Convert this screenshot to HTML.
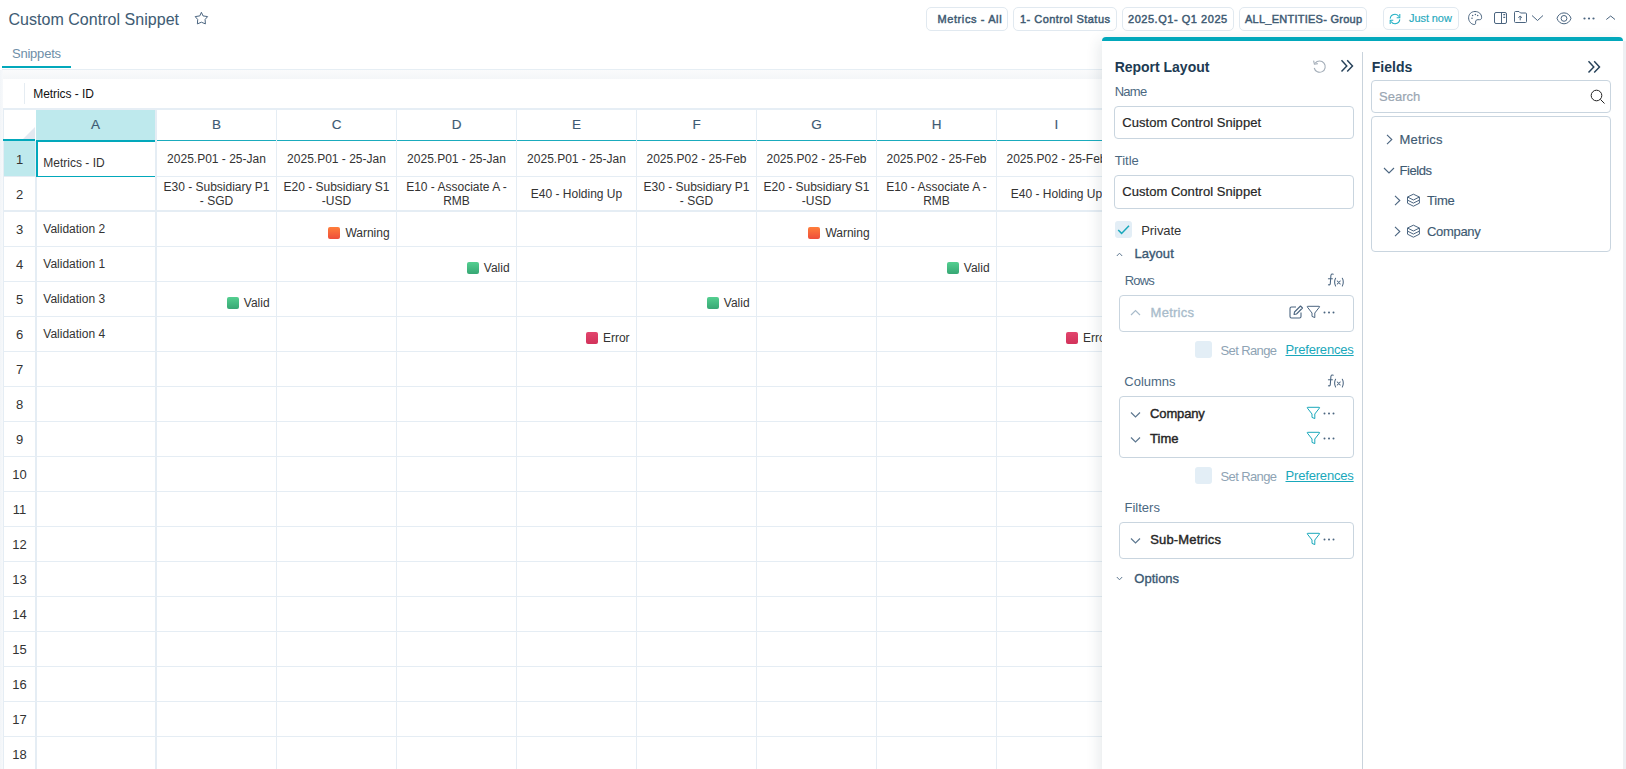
<!DOCTYPE html>
<html><head><meta charset="utf-8">
<style>
*{box-sizing:border-box;margin:0;padding:0}
html,body{width:1626px;height:769px;overflow:hidden;background:#fff;font-family:"Liberation Sans",sans-serif;position:relative}
.a{position:absolute}
.t{position:absolute;white-space:nowrap;line-height:1}
.chip{position:absolute;top:7px;height:24px;border:1px solid #e1e9f0;border-radius:5px;background:#fff}
.hl{position:absolute;height:1px;background:#e5edf4}
.vl{position:absolute;width:1px;background:#e5edf4}
.sq{position:absolute;width:12px;height:12px;border-radius:2px}
.sqw{background:linear-gradient(#ff7e3b,#ee4d3b)}
.sqv{background:linear-gradient(#54cf90,#37a774)}
.sqe{background:linear-gradient(#e2456d,#d2325a)}
.box{position:absolute;border:1px solid #c9d5df;border-radius:4px;background:#fff}
.cb{position:absolute;width:17px;height:17px;background:#e3eef6;border-radius:3px}
svg{position:absolute;overflow:visible}
</style></head><body>

<div class="t" style="left:8.50px;top:12.06px;font-size:16px;color:#405c74;letter-spacing:0.031px;-webkit-text-stroke:0.05px #405c74;">Custom Control Snippet</div>
<svg style="left:194px;top:11px" width="15" height="15" viewBox="0 0 15 15"><path d="M7.4 1.3 L9 4.9 L13.6 5.6 L11.1 8.5 L11.4 12.9 L7.4 11.2 L3.4 12.9 L3.7 8.5 L1.2 5.6 L5.8 4.9 Z" fill="none" stroke="#4b6580" stroke-width="1" stroke-linejoin="round"/></svg>
<div class="chip" style="left:926px;width:82px"></div>
<div class="t" style="left:937.40px;top:13.99px;font-size:11px;color:#3e5a72;letter-spacing:0.615px;-webkit-text-stroke:0.45px #3e5a72;">Metrics - All</div>
<div class="chip" style="left:1013px;width:104px"></div>
<div class="t" style="left:1020.00px;top:13.99px;font-size:11px;color:#3e5a72;letter-spacing:0.465px;-webkit-text-stroke:0.45px #3e5a72;">1- Control Status</div>
<div class="chip" style="left:1122px;width:112px"></div>
<div class="t" style="left:1128.00px;top:13.99px;font-size:11px;color:#3e5a72;letter-spacing:0.538px;-webkit-text-stroke:0.45px #3e5a72;">2025.Q1- Q1 2025</div>
<div class="chip" style="left:1239px;width:128px"></div>
<div class="t" style="left:1245.00px;top:13.99px;font-size:11px;color:#3e5a72;letter-spacing:0.251px;-webkit-text-stroke:0.45px #3e5a72;">ALL_ENTITIES- Group</div>
<div class="chip" style="left:1383px;width:76px;height:23px"></div>
<svg style="left:1389px;top:13px" width="12" height="12" viewBox="0 0 12 12"><g fill="none" stroke="#1fb0c4" stroke-width="1.05"><path d="M1.2 5.6 A4.7 4.7 0 0 1 9.9 3.6"/><path d="M10.8 1.1 V4.8 H7.7"/><path d="M10.8 6.4 A4.7 4.7 0 0 1 2.1 8.4"/><path d="M1.2 10.9 V7.2 H4.3"/></g></svg>
<div class="t" style="left:1409.00px;top:12.69px;font-size:11px;color:#1fa9bd;letter-spacing:-0.079px;-webkit-text-stroke:0.15px #1fa9bd;">Just now</div>
<!-- header icons -->
<svg style="left:1468px;top:11px" width="15" height="15" viewBox="0 0 15 15"><path d="M7 0.5 C3.2 0.5 0.6 3.3 0.6 6.8 C0.6 10.5 3.4 13.5 6.3 13.5 C7.8 13.5 7.6 12.2 7.6 11 C7.6 9.4 8.4 8.7 10 8.7 L11.6 8.7 C13.1 8.7 13.6 7.8 13.6 6.4 C13.6 3 10.8 0.5 7 0.5 Z" fill="none" stroke="#4b6580" stroke-width="1"/><circle cx="4.6" cy="4.6" r=".75" fill="#4b6580"/><circle cx="7.4" cy="3.5" r=".75" fill="#4b6580"/><circle cx="9.7" cy="4.6" r=".75" fill="#4b6580"/><circle cx="4" cy="7.3" r=".75" fill="#4b6580"/></svg>
<svg style="left:1494px;top:12px" width="14" height="13" viewBox="0 0 14 13"><rect x="0.5" y="0.5" width="12" height="11" rx="1.5" fill="none" stroke="#4b6580" stroke-width="1"/><path d="M7.5 0.5 V11.5" stroke="#4b6580" stroke-width="1"/><path d="M9.3 2.6 H11.2 M9.3 5.4 H11.2" stroke="#4b6580" stroke-width="1.1"/></svg>
<svg style="left:1514px;top:11px" width="14" height="13" viewBox="0 0 14 13"><path d="M0.5 1.5 Q0.5 0.5 1.5 0.5 H5 L6.5 2 H11.5 Q12.5 2 12.5 3 V10.5 Q12.5 11.5 11.5 11.5 H1.5 Q0.5 11.5 0.5 10.5 Z" fill="none" stroke="#4b6580" stroke-width="1" stroke-linejoin="round"/><path d="M6.2 9.3 V5 M4.4 6.8 L6.2 5 L8 6.8" fill="none" stroke="#4b6580" stroke-width="1"/></svg>
<svg style="left:1531px;top:14px" width="13" height="8" viewBox="0 0 13 8"><path d="M1 1.5 L6.5 6.5 L12 1.5" fill="none" stroke="#4b6580" stroke-width="1"/></svg>
<svg style="left:1556px;top:11.5px" width="16" height="13" viewBox="0 0 16 13"><path d="M1 6.3 C2 3 4.6 0.9 8 0.9 C11.4 0.9 14 3 15 6.3 C14 9.6 11.4 11.8 8 11.8 C4.6 11.8 2 9.6 1 6.3 Z" fill="none" stroke="#4b6580" stroke-width="1"/><circle cx="8" cy="6.4" r="2.9" fill="none" stroke="#4b6580" stroke-width="1"/></svg>
<svg style="left:1583px;top:17px" width="12" height="3" viewBox="0 0 12 3"><circle cx="1.5" cy="1.5" r="1.1" fill="#4b6580"/><circle cx="6" cy="1.5" r="1.1" fill="#4b6580"/><circle cx="10.5" cy="1.5" r="1.1" fill="#4b6580"/></svg>
<svg style="left:1605px;top:14px" width="11" height="7" viewBox="0 0 11 7"><path d="M1.3 5.5 L5.7 2 L10 5.5" fill="none" stroke="#4b6580" stroke-width="1"/></svg>


<div class="t" style="left:12.00px;top:46.80px;font-size:13px;color:#6e8ea7;letter-spacing:-0.224px;">Snippets</div>
<div class="a" style="left:2px;top:66px;width:69px;height:2px;background:#02a8bb"></div>
<div class="a" style="left:2px;top:69px;width:1100px;height:1px;background:#e6eef4"></div>
<div class="a" style="left:0;top:70px;width:1102px;height:9px;background:linear-gradient(#fafbfc,#f4f6f8)"></div>
<div class="a" style="left:0;top:70px;width:3px;height:699px;background:linear-gradient(90deg,#f2f5f8,#f7f9fb)"></div>
<div class="a" style="left:3px;top:79px;width:1099px;height:29px;background:#fff"></div>
<div class="a" style="left:24px;top:83px;width:1px;height:21px;background:#e5ecf2"></div>
<div class="t" style="left:33.20px;top:87.64px;font-size:12px;color:#111;letter-spacing:-0.047px;">Metrics - ID</div>
<div class="a" style="left:0;top:0;width:1102px;height:769px;overflow:hidden">
<div class="a" style="left:3px;top:108px;width:1099px;height:661px;background:#fff"></div>
<div class="a" style="left:3px;top:108px;width:1099px;height:2px;background:#e6eef5"></div>
<div class="vl" style="left:3px;top:108px;height:661px"></div>
<svg style="left:23px;top:127px" width="12" height="12" viewBox="0 0 12 12"><path d="M12 0 L12 12 L0 12 Z" fill="#e3e9f1"/></svg>
<div class="a" style="left:3px;top:139px;width:32px;height:2px;background:#02a8bb"></div>
<div class="a" style="left:36px;top:110px;width:119px;height:30px;background:#bee9ed"></div>
<div class="a" style="left:4px;top:141px;width:31px;height:35px;background:#bee9ed"></div>
<div class="a" style="left:157px;top:140px;width:945px;height:1px;background:#1aabbd"></div>
<div class="a" style="left:36px;top:140px;width:119px;height:2px;background:#02a8bb"></div>
<div class="a" style="left:35px;top:141px;width:2px;height:628px;background:#e5edf4"></div>
<div class="a" style="left:155px;top:110px;width:2px;height:659px;background:#e5edf4"></div>
<div class="vl" style="left:276px;top:110px;height:659px"></div>
<div class="vl" style="left:396px;top:110px;height:659px"></div>
<div class="vl" style="left:516px;top:110px;height:659px"></div>
<div class="vl" style="left:636px;top:110px;height:659px"></div>
<div class="vl" style="left:756px;top:110px;height:659px"></div>
<div class="vl" style="left:876px;top:110px;height:659px"></div>
<div class="vl" style="left:996px;top:110px;height:659px"></div>
<div class="vl" style="left:1116px;top:110px;height:659px"></div>
<div class="hl" style="left:4px;top:176px;width:1098px"></div>
<div class="hl" style="left:4px;top:246px;width:1098px"></div>
<div class="hl" style="left:4px;top:281px;width:1098px"></div>
<div class="hl" style="left:4px;top:316px;width:1098px"></div>
<div class="hl" style="left:4px;top:351px;width:1098px"></div>
<div class="hl" style="left:4px;top:386px;width:1098px"></div>
<div class="hl" style="left:4px;top:421px;width:1098px"></div>
<div class="hl" style="left:4px;top:456px;width:1098px"></div>
<div class="hl" style="left:4px;top:491px;width:1098px"></div>
<div class="hl" style="left:4px;top:526px;width:1098px"></div>
<div class="hl" style="left:4px;top:561px;width:1098px"></div>
<div class="hl" style="left:4px;top:596px;width:1098px"></div>
<div class="hl" style="left:4px;top:631px;width:1098px"></div>
<div class="hl" style="left:4px;top:666px;width:1098px"></div>
<div class="hl" style="left:4px;top:701px;width:1098px"></div>
<div class="hl" style="left:4px;top:736px;width:1098px"></div>
<div class="hl" style="left:4px;top:771px;width:1098px"></div>
<div class="a" style="left:4px;top:210px;width:1098px;height:2px;background:#e5edf4"></div>
<div class="a" style="left:36px;top:141px;width:2px;height:36px;background:#02a8bb"></div>
<div class="a" style="left:36px;top:176px;width:119px;height:1px;background:#02a8bb"></div>
<div class="t" style="left:90.98px;top:118.27px;font-size:13.5px;color:#3d5a73;-webkit-text-stroke:0.15px #3d5a73;">A</div>
<div class="t" style="left:212.01px;top:118.27px;font-size:13.5px;color:#3d5a73;-webkit-text-stroke:0.15px #3d5a73;">B</div>
<div class="t" style="left:331.64px;top:118.27px;font-size:13.5px;color:#3d5a73;-webkit-text-stroke:0.15px #3d5a73;">C</div>
<div class="t" style="left:451.64px;top:118.27px;font-size:13.5px;color:#3d5a73;-webkit-text-stroke:0.15px #3d5a73;">D</div>
<div class="t" style="left:572.01px;top:118.27px;font-size:13.5px;color:#3d5a73;-webkit-text-stroke:0.15px #3d5a73;">E</div>
<div class="t" style="left:692.38px;top:118.27px;font-size:13.5px;color:#3d5a73;-webkit-text-stroke:0.15px #3d5a73;">F</div>
<div class="t" style="left:811.24px;top:118.27px;font-size:13.5px;color:#3d5a73;-webkit-text-stroke:0.15px #3d5a73;">G</div>
<div class="t" style="left:931.64px;top:118.27px;font-size:13.5px;color:#3d5a73;-webkit-text-stroke:0.15px #3d5a73;">H</div>
<div class="t" style="left:1054.61px;top:118.27px;font-size:13.5px;color:#3d5a73;-webkit-text-stroke:0.15px #3d5a73;">I</div>
<div class="t" style="left:15.89px;top:152.70px;font-size:13px;color:#333;">1</div>
<div class="t" style="left:15.89px;top:187.70px;font-size:13px;color:#333;">2</div>
<div class="t" style="left:15.89px;top:222.70px;font-size:13px;color:#333;">3</div>
<div class="t" style="left:15.89px;top:257.70px;font-size:13px;color:#333;">4</div>
<div class="t" style="left:15.89px;top:292.70px;font-size:13px;color:#333;">5</div>
<div class="t" style="left:15.89px;top:327.70px;font-size:13px;color:#333;">6</div>
<div class="t" style="left:15.89px;top:362.70px;font-size:13px;color:#333;">7</div>
<div class="t" style="left:15.89px;top:397.70px;font-size:13px;color:#333;">8</div>
<div class="t" style="left:15.89px;top:432.70px;font-size:13px;color:#333;">9</div>
<div class="t" style="left:12.29px;top:467.70px;font-size:13px;color:#333;">10</div>
<div class="t" style="left:12.74px;top:502.70px;font-size:13px;color:#333;">11</div>
<div class="t" style="left:12.29px;top:537.70px;font-size:13px;color:#333;">12</div>
<div class="t" style="left:12.29px;top:572.70px;font-size:13px;color:#333;">13</div>
<div class="t" style="left:12.29px;top:607.70px;font-size:13px;color:#333;">14</div>
<div class="t" style="left:12.29px;top:642.70px;font-size:13px;color:#333;">15</div>
<div class="t" style="left:12.29px;top:677.70px;font-size:13px;color:#333;">16</div>
<div class="t" style="left:12.29px;top:712.70px;font-size:13px;color:#333;">17</div>
<div class="t" style="left:12.29px;top:747.70px;font-size:13px;color:#333;">18</div>
<div class="t" style="left:43.30px;top:157.14px;font-size:12px;color:#333;">Metrics - ID</div>
<div class="t" style="left:167.12px;top:152.74px;font-size:12px;color:#333;">2025.P01 - 25-Jan</div>
<div class="t" style="left:163.46px;top:180.84px;font-size:12px;color:#333;">E30 - Subsidiary P1</div>
<div class="t" style="left:199.82px;top:194.84px;font-size:12px;color:#333;">- SGD</div>
<div class="t" style="left:287.12px;top:152.74px;font-size:12px;color:#333;">2025.P01 - 25-Jan</div>
<div class="t" style="left:283.46px;top:180.84px;font-size:12px;color:#333;">E20 - Subsidiary S1</div>
<div class="t" style="left:321.83px;top:194.84px;font-size:12px;color:#333;">-USD</div>
<div class="t" style="left:407.12px;top:152.74px;font-size:12px;color:#333;">2025.P01 - 25-Jan</div>
<div class="t" style="left:406.13px;top:180.84px;font-size:12px;color:#333;">E10 - Associate A -</div>
<div class="t" style="left:443.18px;top:194.84px;font-size:12px;color:#333;">RMB</div>
<div class="t" style="left:527.12px;top:152.74px;font-size:12px;color:#333;">2025.P01 - 25-Jan</div>
<div class="t" style="left:530.81px;top:188.14px;font-size:12px;color:#333;">E40 - Holding Up</div>
<div class="t" style="left:646.46px;top:152.74px;font-size:12px;color:#333;">2025.P02 - 25-Feb</div>
<div class="t" style="left:643.46px;top:180.84px;font-size:12px;color:#333;">E30 - Subsidiary P1</div>
<div class="t" style="left:679.82px;top:194.84px;font-size:12px;color:#333;">- SGD</div>
<div class="t" style="left:766.46px;top:152.74px;font-size:12px;color:#333;">2025.P02 - 25-Feb</div>
<div class="t" style="left:763.46px;top:180.84px;font-size:12px;color:#333;">E20 - Subsidiary S1</div>
<div class="t" style="left:801.83px;top:194.84px;font-size:12px;color:#333;">-USD</div>
<div class="t" style="left:886.46px;top:152.74px;font-size:12px;color:#333;">2025.P02 - 25-Feb</div>
<div class="t" style="left:886.13px;top:180.84px;font-size:12px;color:#333;">E10 - Associate A -</div>
<div class="t" style="left:923.18px;top:194.84px;font-size:12px;color:#333;">RMB</div>
<div class="t" style="left:1006.46px;top:152.74px;font-size:12px;color:#333;">2025.P02 - 25-Feb</div>
<div class="t" style="left:1010.81px;top:188.14px;font-size:12px;color:#333;">E40 - Holding Up</div>
<div class="t" style="left:43.30px;top:223.14px;font-size:12px;color:#333;">Validation 2</div>
<div class="t" style="left:43.30px;top:258.14px;font-size:12px;color:#333;">Validation 1</div>
<div class="t" style="left:43.30px;top:293.14px;font-size:12px;color:#333;">Validation 3</div>
<div class="t" style="left:43.30px;top:328.14px;font-size:12px;color:#333;">Validation 4</div>
<div class="sq sqw" style="left:328.2px;top:226.9px"></div>
<div class="t" style="left:345.38px;top:227.04px;font-size:12px;color:#333;">Warning</div>
<div class="sq sqw" style="left:808.2px;top:226.9px"></div>
<div class="t" style="left:825.38px;top:227.04px;font-size:12px;color:#333;">Warning</div>
<div class="sq sqv" style="left:466.6px;top:261.9px"></div>
<div class="t" style="left:483.80px;top:262.04px;font-size:12px;color:#333;">Valid</div>
<div class="sq sqv" style="left:946.6px;top:261.9px"></div>
<div class="t" style="left:963.80px;top:262.04px;font-size:12px;color:#333;">Valid</div>
<div class="sq sqv" style="left:226.6px;top:296.9px"></div>
<div class="t" style="left:243.80px;top:297.04px;font-size:12px;color:#333;">Valid</div>
<div class="sq sqv" style="left:706.6px;top:296.9px"></div>
<div class="t" style="left:723.80px;top:297.04px;font-size:12px;color:#333;">Valid</div>
<div class="sq sqe" style="left:585.8px;top:331.9px"></div>
<div class="t" style="left:602.96px;top:332.04px;font-size:12px;color:#333;">Error</div>
<div class="sq sqe" style="left:1065.8px;top:331.9px"></div>
<div class="t" style="left:1082.96px;top:332.04px;font-size:12px;color:#333;">Error</div>
</div>
<div class="a" style="left:1102px;top:37px;width:521px;height:740px;background:#fff;border-radius:5px 5px 0 0;box-shadow:-3px 3px 14px rgba(40,60,80,.11)"></div>
<div class="a" style="left:1102px;top:37px;width:521px;height:4px;background:#02a8bb;border-radius:5px 5px 0 0"></div>
<div class="a" style="left:1623px;top:41px;width:3px;height:728px;background:#eef0f3"></div>
<div class="a" style="left:1362px;top:52px;width:1px;height:717px;background:#c9d3dc"></div>
<div class="t" style="left:1114.70px;top:60.05px;font-size:14px;color:#203a52;font-weight:bold;letter-spacing:-0.018px;">Report Layout</div>
<svg style="left:1312px;top:59px" width="15" height="15" viewBox="0 0 15 15"><path d="M3.2 4.2 A5.6 5.6 0 1 1 2.2 9" fill="none" stroke="#a3adb8" stroke-width="1.1"/><path d="M1.6 1.6 L2.4 5.2 L5.8 4.6" fill="none" stroke="#a3adb8" stroke-width="1.1"/></svg>
<svg style="left:1340px;top:59px" width="14" height="13" viewBox="0 0 14 13"><path d="M1.5 1.3 L6.8 6.9 L1.5 12.5 M7.2 1.3 L12.5 6.9 L7.2 12.5" fill="none" stroke="#27425a" stroke-width="1.45"/></svg>
<div class="t" style="left:1114.70px;top:85.10px;font-size:13px;color:#4b6881;letter-spacing:-0.737px;">Name</div>
<div class="box" style="left:1114px;top:106px;width:240px;height:33px"></div>
<div class="t" style="left:1122.30px;top:115.80px;font-size:13px;color:#262626;letter-spacing:0.034px;-webkit-text-stroke:0.2px #262626;">Custom Control Snippet</div>
<div class="t" style="left:1114.70px;top:154.00px;font-size:13px;color:#4b6881;">Title</div>
<div class="box" style="left:1114px;top:175px;width:240px;height:34px"></div>
<div class="t" style="left:1122.30px;top:184.80px;font-size:13px;color:#262626;letter-spacing:0.034px;-webkit-text-stroke:0.2px #262626;">Custom Control Snippet</div>
<div class="cb" style="left:1115px;top:221px"></div>
<svg style="left:1117px;top:223px" width="13" height="13" viewBox="0 0 13 13"><path d="M1.2 7 L4.6 10.4 L12 2.8" fill="none" stroke="#19a8bb" stroke-width="1.5"/></svg>
<div class="t" style="left:1141.20px;top:224.00px;font-size:13px;color:#333;letter-spacing:-0.055px;">Private</div>
<svg style="left:1116px;top:252px" width="7" height="5" viewBox="0 0 7 5"><path d="M.8 4 L3.5 1.2 L6.2 4" fill="none" stroke="#5e7890" stroke-width="1"/></svg>
<div class="t" style="left:1134.40px;top:246.90px;font-size:13px;color:#3b5872;letter-spacing:0.067px;-webkit-text-stroke:0.35px #3b5872;">Layout</div>
<div class="t" style="left:1124.80px;top:273.70px;font-size:13px;color:#4b6881;letter-spacing:-0.833px;">Rows</div>
<svg style="left:1326px;top:272px" width="20" height="16" viewBox="0 0 20 16"><g fill="none" stroke="#4b6580" stroke-width="1.05" stroke-linecap="round"><path d="M7.2 2.2 C6.4 1.7 5.2 1.9 4.9 3.4 L4.3 11.6 C4.1 12.8 3.3 13 2.4 12.8"/><path d="M2.4 6.8 H6.4"/><path d="M9.6 6.2 C8.3 8 8.3 12 9.6 14"/><path d="M11.3 9 L14.2 12 M14.2 9 L11.3 12"/><path d="M16.3 6.2 C17.6 8 17.6 12 16.3 14"/></g></svg>
<div class="box" style="left:1119px;top:295px;width:235px;height:37px"></div>
<svg style="left:1130px;top:309px" width="11" height="7" viewBox="0 0 11 7"><path d="M1 6 L5.5 1.5 L10 6" fill="none" stroke="#a9bccb" stroke-width="1.2"/></svg>
<div class="t" style="left:1150.60px;top:305.70px;font-size:13px;color:#a9bccb;letter-spacing:0.240px;-webkit-text-stroke:0.35px #a9bccb;">Metrics</div>
<svg style="left:1289px;top:305px" width="15" height="14" viewBox="0 0 15 14"><path d="M7 2 H2.5 A1.5 1.5 0 0 0 1 3.5 V11.5 A1.5 1.5 0 0 0 2.5 13 H10.5 A1.5 1.5 0 0 0 12 11.5 V7.5" fill="none" stroke="#4b6580" stroke-width="1.1"/><path d="M11.5 1 L13.5 3 L7.5 9 L5 9.5 L5.5 7 Z" fill="none" stroke="#4b6580" stroke-width="1.1" stroke-linejoin="round"/></svg>
<svg style="left:1306.3px;top:305.4px" width="15" height="14" viewBox="0 0 15 14"><path d="M1.8 1.3 H13 Q14 1.3 13.4 2.1 L8.8 8 V12.6 L6 11.4 V8 L1.4 2.1 Q0.8 1.3 1.8 1.3 Z" fill="none" stroke="#4b6580" stroke-width="1" stroke-linejoin="round"/></svg>
<svg style="left:1323px;top:311px" width="12" height="3" viewBox="0 0 12 3"><circle cx="1.5" cy="1.5" r="1" fill="#4b6580"/><circle cx="6" cy="1.5" r="1" fill="#4b6580"/><circle cx="10.5" cy="1.5" r="1" fill="#4b6580"/></svg>
<div class="cb" style="left:1195px;top:341px"></div>
<div class="t" style="left:1220.50px;top:343.50px;font-size:13px;color:#8ea3b4;letter-spacing:-0.616px;">Set Range</div>
<div class="t" style="left:1285.50px;top:342.90px;font-size:13px;color:#19a8bb;letter-spacing:-0.177px;text-decoration:underline;">Preferences</div>
<div class="t" style="left:1124.30px;top:374.80px;font-size:13px;color:#4b6881;">Columns</div>
<svg style="left:1326px;top:373px" width="20" height="16" viewBox="0 0 20 16"><g fill="none" stroke="#4b6580" stroke-width="1.05" stroke-linecap="round"><path d="M7.2 2.2 C6.4 1.7 5.2 1.9 4.9 3.4 L4.3 11.6 C4.1 12.8 3.3 13 2.4 12.8"/><path d="M2.4 6.8 H6.4"/><path d="M9.6 6.2 C8.3 8 8.3 12 9.6 14"/><path d="M11.3 9 L14.2 12 M14.2 9 L11.3 12"/><path d="M16.3 6.2 C17.6 8 17.6 12 16.3 14"/></g></svg>
<div class="box" style="left:1119px;top:396px;width:235px;height:62px"></div>
<svg style="left:1130px;top:411px" width="11" height="7" viewBox="0 0 11 7"><path d="M1 1.5 L5.5 6 L10 1.5" fill="none" stroke="#5e7890" stroke-width="1.2"/></svg>
<div class="t" style="left:1150.10px;top:406.80px;font-size:13px;color:#262626;letter-spacing:-0.157px;-webkit-text-stroke:0.4px #262626;">Company</div>
<svg style="left:1306.3px;top:406.4px" width="15" height="14" viewBox="0 0 15 14"><path d="M1.8 1.3 H13 Q14 1.3 13.4 2.1 L8.8 8 V12.6 L6 11.4 V8 L1.4 2.1 Q0.8 1.3 1.8 1.3 Z" fill="none" stroke="#19a8bb" stroke-width="1" stroke-linejoin="round"/></svg>
<svg style="left:1323px;top:412px" width="12" height="3" viewBox="0 0 12 3"><circle cx="1.5" cy="1.5" r="1" fill="#4b6580"/><circle cx="6" cy="1.5" r="1" fill="#4b6580"/><circle cx="10.5" cy="1.5" r="1" fill="#4b6580"/></svg>
<svg style="left:1130px;top:436px" width="11" height="7" viewBox="0 0 11 7"><path d="M1 1.5 L5.5 6 L10 1.5" fill="none" stroke="#5e7890" stroke-width="1.2"/></svg>
<div class="t" style="left:1150.10px;top:432.00px;font-size:13px;color:#262626;-webkit-text-stroke:0.4px #262626;">Time</div>
<svg style="left:1306.3px;top:431.4px" width="15" height="14" viewBox="0 0 15 14"><path d="M1.8 1.3 H13 Q14 1.3 13.4 2.1 L8.8 8 V12.6 L6 11.4 V8 L1.4 2.1 Q0.8 1.3 1.8 1.3 Z" fill="none" stroke="#19a8bb" stroke-width="1" stroke-linejoin="round"/></svg>
<svg style="left:1323px;top:437px" width="12" height="3" viewBox="0 0 12 3"><circle cx="1.5" cy="1.5" r="1" fill="#4b6580"/><circle cx="6" cy="1.5" r="1" fill="#4b6580"/><circle cx="10.5" cy="1.5" r="1" fill="#4b6580"/></svg>
<div class="cb" style="left:1195px;top:467px"></div>
<div class="t" style="left:1220.50px;top:469.50px;font-size:13px;color:#8ea3b4;letter-spacing:-0.616px;">Set Range</div>
<div class="t" style="left:1285.50px;top:468.90px;font-size:13px;color:#19a8bb;letter-spacing:-0.177px;text-decoration:underline;">Preferences</div>
<div class="t" style="left:1124.50px;top:500.90px;font-size:13px;color:#4b6881;">Filters</div>
<div class="box" style="left:1119px;top:522px;width:235px;height:37px"></div>
<svg style="left:1130px;top:537px" width="11" height="7" viewBox="0 0 11 7"><path d="M1 1.5 L5.5 6 L10 1.5" fill="none" stroke="#5e7890" stroke-width="1.2"/></svg>
<div class="t" style="left:1150.30px;top:532.90px;font-size:13px;color:#262626;letter-spacing:0.135px;-webkit-text-stroke:0.4px #262626;">Sub-Metrics</div>
<svg style="left:1306.3px;top:532.4px" width="15" height="14" viewBox="0 0 15 14"><path d="M1.8 1.3 H13 Q14 1.3 13.4 2.1 L8.8 8 V12.6 L6 11.4 V8 L1.4 2.1 Q0.8 1.3 1.8 1.3 Z" fill="none" stroke="#19a8bb" stroke-width="1" stroke-linejoin="round"/></svg>
<svg style="left:1323px;top:538px" width="12" height="3" viewBox="0 0 12 3"><circle cx="1.5" cy="1.5" r="1" fill="#4b6580"/><circle cx="6" cy="1.5" r="1" fill="#4b6580"/><circle cx="10.5" cy="1.5" r="1" fill="#4b6580"/></svg>
<svg style="left:1116px;top:576px" width="7" height="5" viewBox="0 0 7 5"><path d="M.8 1 L3.5 3.8 L6.2 1" fill="none" stroke="#5e7890" stroke-width="1"/></svg>
<div class="t" style="left:1134.30px;top:571.70px;font-size:13px;color:#3b5872;-webkit-text-stroke:0.35px #3b5872;">Options</div>
<div class="t" style="left:1371.80px;top:60.05px;font-size:14px;color:#203a52;font-weight:bold;">Fields</div>
<svg style="left:1587px;top:60.3px" width="14" height="13" viewBox="0 0 14 13"><path d="M1.5 1.3 L6.8 6.9 L1.5 12.5 M7.2 1.3 L12.5 6.9 L7.2 12.5" fill="none" stroke="#27425a" stroke-width="1.45"/></svg>
<div class="box" style="left:1371px;top:80px;width:240px;height:33px"></div>
<div class="t" style="left:1379.00px;top:89.70px;font-size:13px;color:#9aa6b2;-webkit-text-stroke:0.2px #9aa6b2;">Search</div>
<svg style="left:1590.25px;top:88.75px" width="16" height="16" viewBox="0 0 16 16"><circle cx="6.5" cy="6.5" r="5.3" fill="none" stroke="#222" stroke-width="1"/><path d="M10.4 10.4 L14.5 14.5" stroke="#222" stroke-width="1"/></svg>
<div class="box" style="left:1371px;top:116px;width:240px;height:136px"></div>
<svg style="left:1386px;top:134px" width="7" height="11" viewBox="0 0 7 11"><path d="M1 .8 L5.8 5.5 L1 10.2" fill="none" stroke="#4b6580" stroke-width="1.1"/></svg>
<div class="t" style="left:1399.60px;top:133.00px;font-size:13px;color:#3e5a72;letter-spacing:0.173px;-webkit-text-stroke:0.15px #3e5a72;">Metrics</div>
<svg style="left:1383px;top:167px" width="12" height="7" viewBox="0 0 12 7"><path d="M1 1 L6 6 L11 1" fill="none" stroke="#4b6580" stroke-width="1.1"/></svg>
<div class="t" style="left:1399.60px;top:163.90px;font-size:13px;color:#3e5a72;letter-spacing:-0.442px;-webkit-text-stroke:0.15px #3e5a72;">Fields</div>
<svg style="left:1394.3px;top:195.3px" width="7" height="11" viewBox="0 0 7 11"><path d="M1 .8 L5.8 5.5 L1 10.2" fill="none" stroke="#4b6580" stroke-width="1.1"/></svg>
<svg style="left:1406px;top:193px" width="15" height="14" viewBox="0 0 15 14"><path d="M7.4 1.2 L13.4 4 L7.4 7 L1.5 4 Z M1.5 4 V7.1 L7.4 10.1 L13.4 7.1 V4 M1.5 7.1 V10.2 L7.4 13.2 L13.4 10.2 V7.1" fill="none" stroke="#4b6580" stroke-width="1" stroke-linejoin="round"/></svg>
<div class="t" style="left:1427.00px;top:193.90px;font-size:13px;color:#3e5a72;letter-spacing:-0.235px;-webkit-text-stroke:0.15px #3e5a72;">Time</div>
<svg style="left:1394.3px;top:225.8px" width="7" height="11" viewBox="0 0 7 11"><path d="M1 .8 L5.8 5.5 L1 10.2" fill="none" stroke="#4b6580" stroke-width="1.1"/></svg>
<svg style="left:1406px;top:224px" width="15" height="14" viewBox="0 0 15 14"><path d="M7.4 1.2 L13.4 4 L7.4 7 L1.5 4 Z M1.5 4 V7.1 L7.4 10.1 L13.4 7.1 V4 M1.5 7.1 V10.2 L7.4 13.2 L13.4 10.2 V7.1" fill="none" stroke="#4b6580" stroke-width="1" stroke-linejoin="round"/></svg>
<div class="t" style="left:1427.00px;top:224.80px;font-size:13px;color:#3e5a72;letter-spacing:-0.323px;-webkit-text-stroke:0.15px #3e5a72;">Company</div>
</body></html>
